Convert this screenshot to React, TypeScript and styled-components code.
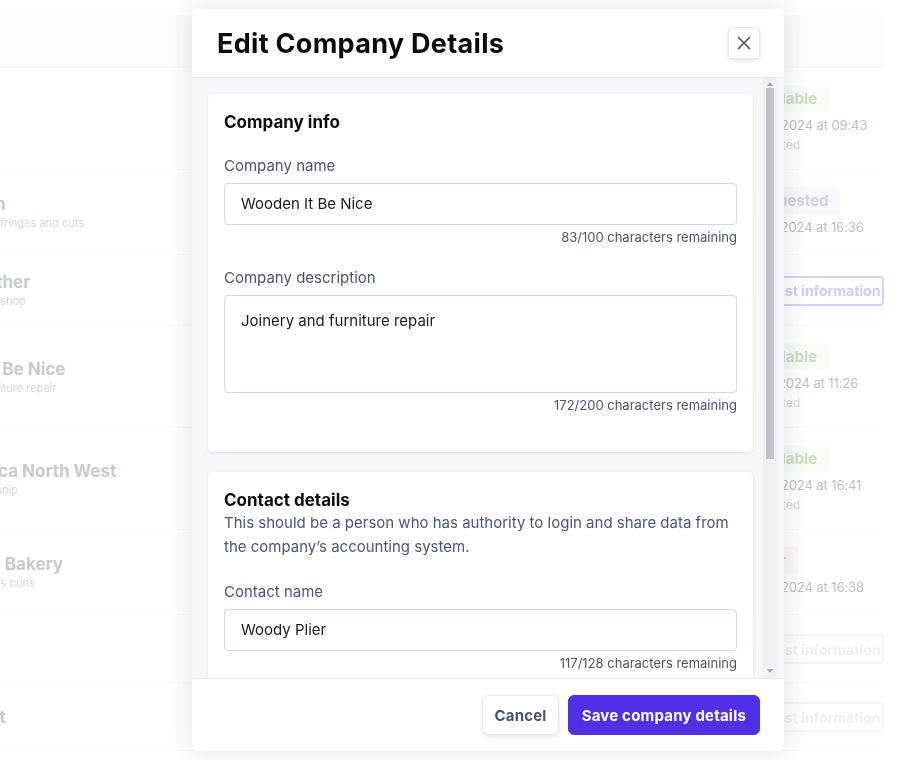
import React from 'react';
import styled, { createGlobalStyle } from 'styled-components';
import { X } from 'lucide-react';

const GlobalStyle = createGlobalStyle`
  html, body {
    margin: 0;
    padding: 0;
    background: #ffffff;
    font-family: Inter, "Noto Sans", sans-serif;
    overflow: hidden;
  }
`;

const Page = styled.div`
  margin-left: -86px;
  padding: 15px 20px 0 0;
`;

const TableHead = styled.div`
  display: flex;
  align-items: center;
  height: 52px;
  background: #eef1f5;
  border-bottom: 1px solid #e4e8ee;
  font-size: 13px;
  font-weight: 700;
  color: #4a5568;
`;

const HeadCell = styled.div<{ $width?: number }>`
  flex: ${p => (p.$width ? `0 0 ${p.$width}px` : '1')};
`;

const Row = styled.div`
  display: flex;
  align-items: center;
  padding: 17px 0 16px;
  border-bottom: 1px solid #e6e9ee;
`;

const NameCell = styled.div`
  flex: 1;
  display: flex;
  flex-direction: column;
`;

const CompanyName = styled.div`
  font-size: 17px;
  line-height: 21px;
  font-weight: 700;
  color: #4a4a4a;
  white-space: nowrap;
`;

const CompanyDesc = styled.div`
  font-size: 11px;
  line-height: 16px;
  color: #777777;
  white-space: nowrap;
`;

const StatusCell = styled.div`
  flex: 0 0 146px;
  display: flex;
  flex-direction: column;
  align-items: flex-start;
`;

const badgeColours = {
  available: { bg: '#e3f5dd', fg: '#4c8a3c' },
  requested: { bg: '#e3ebfb', fg: '#5a6fa8' },
  error: { bg: '#fbe3e3', fg: '#c24141' },
};

const Badge = styled.span<{ $kind: keyof typeof badgeColours }>`
  display: inline-flex;
  align-items: center;
  height: 27px;
  padding: 0 12px;
  margin-bottom: 2px;
  border-radius: 4px;
  font-size: 15px;
  font-weight: 700;
  background: ${p => badgeColours[p.$kind].bg};
  color: ${p => badgeColours[p.$kind].fg};
`;

const DateText = styled.div`
  font-size: 13px;
  line-height: 22px;
  letter-spacing: -0.1px;
  color: #222222;
  white-space: nowrap;
`;

const Note = styled.div`
  font-size: 12px;
  line-height: 17px;
  color: #777777;
`;

const RequestButton = styled.button<{ $disabled?: boolean }>`
  height: 30px;
  width: 100%;
  margin: 2px 0;
  padding: 0;
  border-radius: 4px;
  background: #ffffff;
  font-family: inherit;
  font-size: 14px;
  font-weight: 700;
  border: 2px solid ${p => (p.$disabled ? '#d6d9de' : '#7f62f0')};
  color: ${p => (p.$disabled ? '#c4c7cc' : '#6a4cec')};
`;

const Overlay = styled.div`
  position: fixed;
  inset: 0;
  background: rgba(255, 255, 255, 0.7);
  padding: 9px 0 0 192px;
`;

const Modal = styled.div`
  width: 592px;
  height: 742px;
  display: flex;
  flex-direction: column;
  background: #ffffff;
  border-radius: 5px;
  box-shadow: 0 0 26px rgba(30, 40, 60, 0.14);
  overflow: hidden;
`;

const ModalHeader = styled.div`
  flex: 0 0 68px;
  display: flex;
  align-items: center;
  justify-content: space-between;
  padding: 0 24px 0 25px;
  border-bottom: 1px solid #e2e7ee;
`;

const Title = styled.h2`
  margin: 0;
  font-size: 27px;
  font-weight: 700;
  letter-spacing: 0.3px;
  color: #0b0b14;
`;

const CloseButton = styled.button`
  width: 32px;
  height: 32px;
  display: flex;
  align-items: center;
  justify-content: center;
  padding: 0;
  background: #ffffff;
  border: 1px solid #e4e8ee;
  border-radius: 4px;
  box-shadow: 0 2px 4px rgba(40, 50, 70, 0.12);
  color: #4a5568;
`;

const ModalBody = styled.div`
  flex: 1;
  min-height: 0;
  display: flex;
  background: #f5f8fb;
  padding-right: 7px;
`;

const Scroll = styled.div`
  flex: 1;
  overflow: hidden;
  padding: 16px 10px 0 16px;
  display: flex;
  flex-direction: column;
  gap: 20px;
`;

const ScrollTrack = styled.div`
  flex: 0 0 14px;
  display: flex;
  flex-direction: column;
  align-items: center;
  padding: 4px 0 5px;
  background: #eef0f3;
`;

const ScrollArrow = styled.span<{ $down?: boolean }>`
  width: 0;
  height: 0;
  border-left: 3.5px solid transparent;
  border-right: 3.5px solid transparent;
  ${p => (p.$down ? 'border-top' : 'border-bottom')}: 4px solid #a3a6ad;
  ${p => (p.$down ? 'margin-top: auto;' : '')}
`;

const ScrollThumb = styled.span`
  width: 8px;
  height: 371px;
  margin-top: 2px;
  background: #c1c2c7;
`;

const Card = styled.section`
  flex-shrink: 0;
  background: #ffffff;
  border-radius: 5px;
  box-shadow: 0 1px 3px rgba(30, 40, 60, 0.12);
  padding: 17px 16px 17px;
`;

const CardTitle = styled.h3`
  margin: 0 0 21px;
  font-size: 17px;
  line-height: 23px;
  font-weight: 700;
  color: #0b0b14;
  & + p {
    margin-top: -22px;
  }
`;

const CardText = styled.p`
  margin: 0 0 22px;
  font-size: 15px;
  line-height: 24px;
  color: #4a5578;
`;

const Field = styled.div`
  display: flex;
  flex-direction: column;
  margin-bottom: 22px;
`;

const Label = styled.label`
  font-size: 15px;
  line-height: 22px;
  color: #4a5578;
  margin-bottom: 6px;
`;

const Input = styled.div<{ $multiline?: boolean }>`
  height: ${p => (p.$multiline ? 98 : 42)}px;
  box-sizing: border-box;
  border: 1px solid #cfd8e3;
  border-radius: 4px;
  padding: ${p => (p.$multiline ? '15px 16px' : '0 16px')};
  display: flex;
  align-items: ${p => (p.$multiline ? 'flex-start' : 'center')};
  font-size: 15px;
  line-height: 20px;
  color: #1a1a22;
`;

const Counter = styled.div`
  margin-top: 4px;
  text-align: right;
  font-size: 13px;
  line-height: 16px;
  color: #4a5568;
`;

const ModalFooter = styled.div`
  flex: 0 0 73px;
  box-sizing: border-box;
  display: flex;
  align-items: center;
  justify-content: flex-end;
  gap: 9px;
  padding: 0 24px;
  border-top: 1px solid #e2e7ee;
`;

const FooterButton = styled.button<{ $primary?: boolean }>`
  height: 40px;
  padding: 0 ${p => (p.$primary ? 13 : 11)}px;
  border-radius: 6px;
  font-family: inherit;
  font-size: 15px;
  font-weight: 700;
  letter-spacing: 0.2px;
  border: 1px solid ${p => (p.$primary ? '#5030e5' : '#e4e8ee')};
  background: ${p => (p.$primary ? '#5030e5' : '#ffffff')};
  color: ${p => (p.$primary ? '#ffffff' : '#4a5568')};
  box-shadow: ${p => (p.$primary ? 'none' : '0 2px 4px rgba(40, 50, 70, 0.12)')};
`;

type Status =
  | { type: 'badge'; kind: keyof typeof badgeColours; label: string; date: string; note?: string }
  | { type: 'request'; disabled?: boolean };

type Company = { name: string; desc?: string; status: Status };

const companies: Company[] = [
  { name: 'Apex Ltd', desc: 'Printing', status: { type: 'badge', kind: 'available', label: 'Available', date: '14 Jun 2024 at 09:43', note: 'Connected' } },
  { name: 'Main Salon', desc: 'Colours, perms, fringes and cuts', status: { type: 'badge', kind: 'requested', label: 'Requested', date: '12 Jun 2024 at 16:36' } },
  { name: 'Bridle Leather', desc: 'Leather & repair shop', status: { type: 'request' } },
  { name: 'Wooden It Be Nice', desc: 'Joinery and furniture repair', status: { type: 'badge', kind: 'available', label: 'Available', date: '11 Jun 2024 at 11:26', note: 'Connected' } },
  { name: 'South Africa North West', desc: 'Business ownership', status: { type: 'badge', kind: 'available', label: 'Available', date: '10 Jun 2024 at 16:41', note: 'Connected' } },
  { name: 'Rolling Pin Bakery', desc: 'Bread & hot cross buns', status: { type: 'badge', kind: 'error', label: 'Error', date: '10 Jun 2024 at 16:38' } },
  { name: 'Ace Co', status: { type: 'request', disabled: true } },
  { name: 'Quick Print', status: { type: 'request', disabled: true } },
];

const StatusView: React.FC<{ status: Status }> = ({ status }) => {
  if (status.type === 'request') {
    return <RequestButton $disabled={status.disabled}>Request information</RequestButton>;
  }
  return (
    <>
      <Badge $kind={status.kind}>{status.label}</Badge>
      <DateText>{status.date}</DateText>
      {status.note && <Note>{status.note}</Note>}
    </>
  );
};

const App: React.FC = () => (
  <>
    <GlobalStyle />
    <Page>
      <TableHead>
        <HeadCell>Company</HeadCell>
        <HeadCell $width={146}>Status</HeadCell>
      </TableHead>
      {companies.map(company => (
        <Row key={company.name}>
          <NameCell>
            <CompanyName>{company.name}</CompanyName>
            {company.desc && <CompanyDesc>{company.desc}</CompanyDesc>}
          </NameCell>
          <StatusCell>
            <StatusView status={company.status} />
          </StatusCell>
        </Row>
      ))}
    </Page>
    <Overlay>
      <Modal>
        <ModalHeader>
          <Title>Edit Company Details</Title>
          <CloseButton aria-label="Close">
            <X size={22} strokeWidth={1.8} />
          </CloseButton>
        </ModalHeader>
        <ModalBody>
          <Scroll>
            <Card>
              <CardTitle>Company info</CardTitle>
              <Field>
                <Label>Company name</Label>
                <Input>Wooden It Be Nice</Input>
                <Counter>83/100 characters remaining</Counter>
              </Field>
              <Field>
                <Label>Company description</Label>
                <Input $multiline>Joinery and furniture repair</Input>
                <Counter>172/200 characters remaining</Counter>
              </Field>
            </Card>
            <Card>
              <CardTitle>Contact details</CardTitle>
              <CardText>
                This should be a person who has authority to login and share data from the company’s accounting system.
              </CardText>
              <Field>
                <Label>Contact name</Label>
                <Input>Woody Plier</Input>
                <Counter>117/128 characters remaining</Counter>
              </Field>
              <Field>
                <Label>Contact email</Label>
                <Input>woody@woodenitbenice.co.uk</Input>
                <Counter>102/128 characters remaining</Counter>
              </Field>
            </Card>
          </Scroll>
          <ScrollTrack>
            <ScrollArrow />
            <ScrollThumb />
            <ScrollArrow $down />
          </ScrollTrack>
        </ModalBody>
        <ModalFooter>
          <FooterButton>Cancel</FooterButton>
          <FooterButton $primary>Save company details</FooterButton>
        </ModalFooter>
      </Modal>
    </Overlay>
  </>
);

export default App;
